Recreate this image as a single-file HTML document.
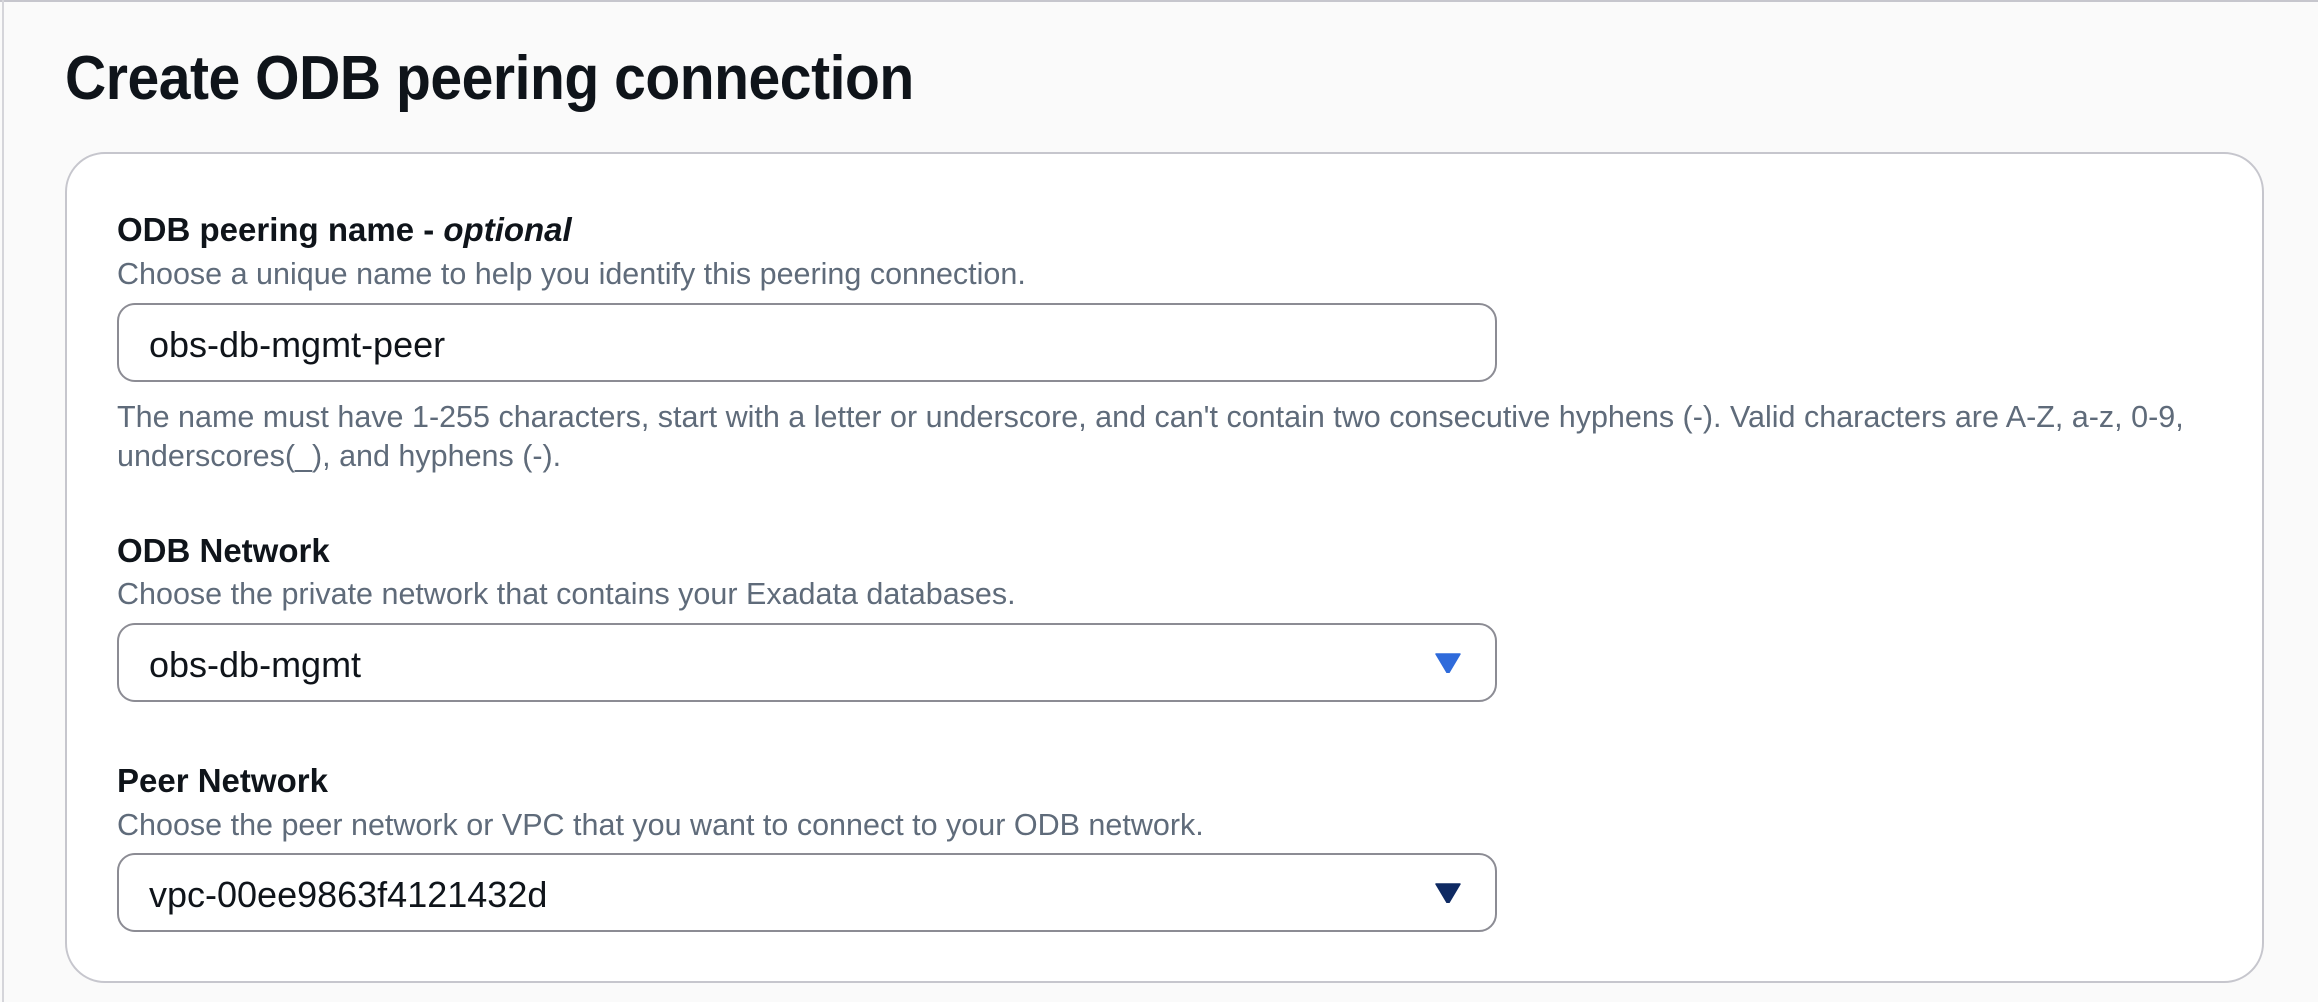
<!DOCTYPE html>
<html><head><meta charset="utf-8"><style>
html,body{margin:0;padding:0}
body{width:2318px;height:1002px;background:#fafafa;position:relative;overflow:hidden;font-family:"Liberation Sans",sans-serif;color:#0f141a}
.tb{position:absolute;left:0;top:0;width:2318px;height:2px;background:#c6c6cd}
.lb{position:absolute;left:2px;top:0;width:2px;height:1002px;background:#d5d5da}
.t{position:absolute;left:65px;top:43px;font-size:62px;font-weight:bold;white-space:nowrap;transform:scaleX(0.92);transform-origin:left top;letter-spacing:-0.5px}
.card{position:absolute;left:65px;top:152px;width:2199px;height:831px;background:#fff;border:2px solid #c6c6cd;border-radius:40px;box-sizing:border-box}
.a{position:absolute;left:117px;white-space:nowrap}
.l{font-size:33px;font-weight:bold;line-height:1}
.d{font-size:30.5px;color:#5f6b7a;line-height:1}
.in{position:absolute;left:117px;width:1380px;height:79px;box-sizing:border-box;border:2px solid #8c8c94;border-radius:18px;background:#fff}
.in span{position:absolute;left:30px;top:19px;font-size:36px;color:#0f141a}
.arr{position:absolute;left:1316px;top:28px}
</style></head><body>
<div class="tb"></div><div class="lb"></div>
<div class="t">Create ODB peering connection</div>
<div class="card"></div>
<div class="a l" style="top:213px">ODB peering name - <i>optional</i></div>
<div class="a d" style="top:259px">Choose a unique name to help you identify this peering connection.</div>
<div class="in" style="top:303px"><span>obs-db-mgmt-peer</span></div>
<div class="a d" style="top:398px;line-height:39px;white-space:normal;width:2130px">The name must have 1-255 characters, start with a letter or underscore, and can't contain two consecutive hyphens (-). Valid characters are A-Z, a-z, 0-9, underscores(_), and hyphens (-).</div>
<div class="a l" style="top:534px">ODB Network</div>
<div class="a d" style="top:579px">Choose the private network that contains your Exadata databases.</div>
<div class="in" style="top:623px"><span>obs-db-mgmt</span>
<svg class="arr" width="26" height="20" viewBox="0 0 26 20"><path d="M1 1H25L14 19.5H12Z" fill="#2f6bdb" stroke="#2f6bdb" stroke-linejoin="round" stroke-width="1.5"/></svg></div>
<div class="a l" style="top:764px">Peer Network</div>
<div class="a d" style="top:810px">Choose the peer network or VPC that you want to connect to your ODB network.</div>
<div class="in" style="top:853px"><span>vpc-00ee9863f4121432d</span>
<svg class="arr" width="26" height="20" viewBox="0 0 26 20"><path d="M1 1H25L14 19.5H12Z" fill="#0f2a63" stroke="#0f2a63" stroke-linejoin="round" stroke-width="1.5"/></svg></div>
</body></html>
